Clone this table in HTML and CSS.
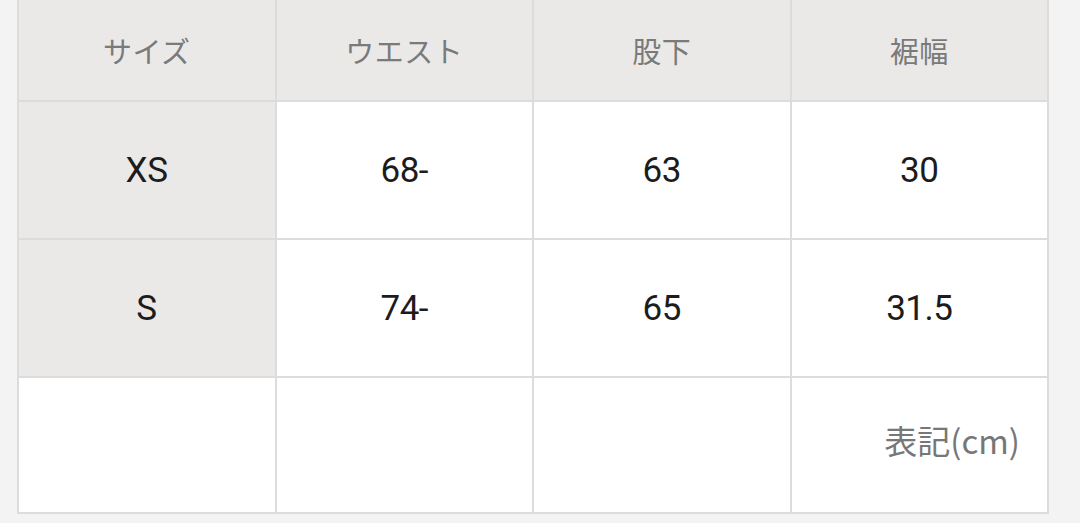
FILE: index.html
```html
<!DOCTYPE html>
<html lang="ja">
<head>
<meta charset="utf-8">
<title>サイズ表</title>
<link rel="stylesheet" href="styles.css">
</head>
<body>
<div class="size-table">
  <div class="cell head">サイズ</div>
  <div class="cell head">ウエスト</div>
  <div class="cell head">股下</div>
  <div class="cell head">裾幅</div>

  <div class="cell label">XS</div>
  <div class="cell num">68-</div>
  <div class="cell num">63</div>
  <div class="cell num">30</div>

  <div class="cell label">S</div>
  <div class="cell num">74-</div>
  <div class="cell num">65</div>
  <div class="cell num">31.5</div>

  <div class="cell blank"></div>
  <div class="cell blank"></div>
  <div class="cell blank"></div>
  <div class="cell note">表記(cm)</div>
</div>
</body>
</html>
```

FILE: styles.css
```css
html, body {
  margin: 0;
  padding: 0;
  background: #f3f3f3;
}

body {
  width: 1080px;
  height: 523px;
  overflow: hidden;
}

.size-table {
  box-sizing: border-box;
  margin-left: 17px;
  width: 1032px;
  display: grid;
  grid-template-columns: repeat(4, 1fr);
  grid-template-rows: 100px 136px 136px 134px;
  gap: 2px;
  padding: 0 2px 2px 2px;
  background: #dddcdc;
}

.cell {
  display: flex;
  align-items: center;
  justify-content: center;
  background: #ffffff;
}

.head {
  background: #ebe9e8;
  color: #7a7a7a;
  font-family: "Noto Sans CJK JP", sans-serif;
  font-size: 29px;
  letter-spacing: 0.5px;
}

.label {
  background: #ebe9e8;
  color: #1c1c1c;
  font-family: Roboto, "Noto Sans", sans-serif;
  font-size: 35px;
}

.num {
  color: #1c1c1c;
  font-family: Roboto, "Noto Sans", sans-serif;
  font-size: 35px;
  letter-spacing: -0.5px;
}

.note {
  justify-content: flex-end;
  padding: 0 27px 10px 0;
  color: #777777;
  font-family: "Noto Sans CJK JP", sans-serif;
  font-size: 33px;
}
```
